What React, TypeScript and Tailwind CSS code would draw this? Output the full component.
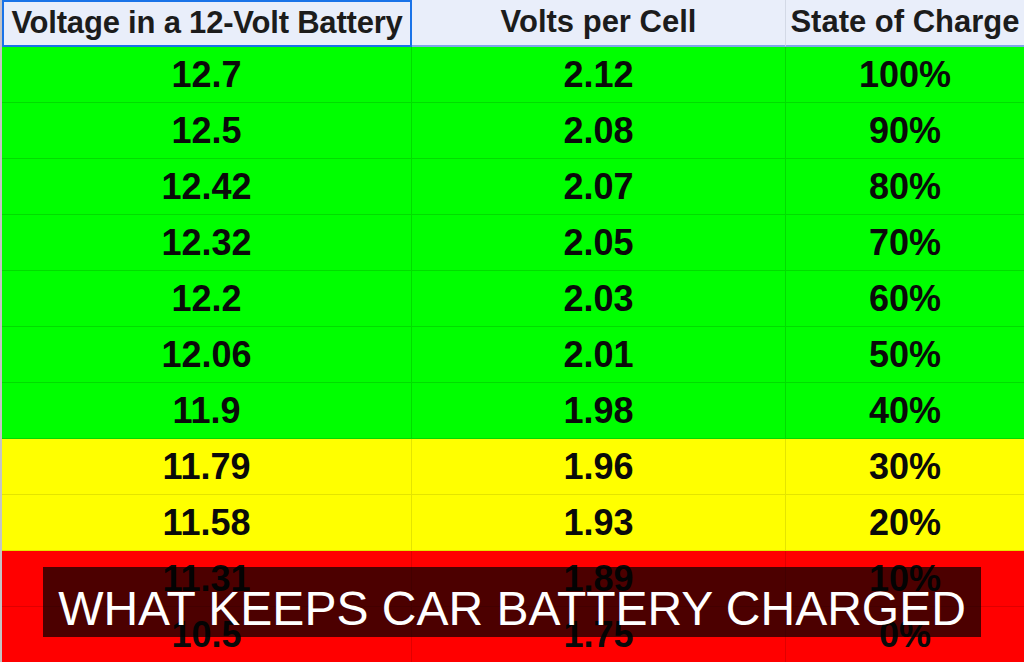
import React from 'react';

type Row = { volts: string; cell: string; charge: string; tone: 'green' | 'yellow' | 'red' };

const rows: Row[] = [
  { volts: '12.7', cell: '2.12', charge: '100%', tone: 'green' },
  { volts: '12.5', cell: '2.08', charge: '90%', tone: 'green' },
  { volts: '12.42', cell: '2.07', charge: '80%', tone: 'green' },
  { volts: '12.32', cell: '2.05', charge: '70%', tone: 'green' },
  { volts: '12.2', cell: '2.03', charge: '60%', tone: 'green' },
  { volts: '12.06', cell: '2.01', charge: '50%', tone: 'green' },
  { volts: '11.9', cell: '1.98', charge: '40%', tone: 'green' },
  { volts: '11.79', cell: '1.96', charge: '30%', tone: 'yellow' },
  { volts: '11.58', cell: '1.93', charge: '20%', tone: 'yellow' },
  { volts: '11.31', cell: '1.89', charge: '10%', tone: 'red' },
  { volts: '10.5', cell: '1.75', charge: '0%', tone: 'red' },
];

const toneClass = {
  green: 'bg-[#00ff00] border-[#00dd00]',
  yellow: 'bg-[#ffff00] border-[#e4e400]',
  red: 'bg-[#ff0000] border-[#e00000]',
};

const Cell = ({ value, tone, last }: { value: string; tone: Row['tone']; last?: boolean }) => (
  <div
    className={`h-[56px] flex items-center justify-center border-b ${last ? '' : 'border-r'} ${toneClass[tone]} text-[36px] font-bold text-[#0a0a0a] leading-none`}
  >
    {value}
  </div>
);

const App: React.FC = () => {
  return (
    <div
      className="relative w-[1024px] h-[662px] overflow-hidden bg-white border-l-2 border-[#c4c4c4]"
      style={{ fontFamily: '"Liberation Sans", Arial, sans-serif' }}
    >
      <div className="grid grid-cols-[410px_374px_238px]">
        <div className="h-[47px] flex items-center justify-center bg-[#e9eefa] border-2 border-[#1a73e8] text-[31px] font-bold text-[#1c1c1c] whitespace-nowrap tracking-[-0.2px]">
          Voltage in a 12-Volt Battery
        </div>
        <div className="h-[47px] flex items-center justify-center bg-[#e9eefa] border-r border-r-[#d3d9e6] border-b-2 border-b-[#7ea6ea] text-[31px] font-bold text-[#1c1c1c] whitespace-nowrap">
          Volts per Cell
        </div>
        <div className="h-[47px] flex items-center justify-center bg-[#e9eefa] border-b-2 border-b-[#7ea6ea] text-[31px] font-bold text-[#1c1c1c] whitespace-nowrap">
          State of Charge
        </div>
        {rows.map((r) => (
          <React.Fragment key={r.volts}>
            <Cell value={r.volts} tone={r.tone} />
            <Cell value={r.cell} tone={r.tone} />
            <Cell value={r.charge} tone={r.tone} last />
          </React.Fragment>
        ))}
      </div>

      {/* caption laid over the table */}
      <div className="absolute left-[41px] top-[567px] w-[938px] h-[70px] bg-black/70 flex justify-center pt-[18px]">
        <span className="text-[48px] leading-[48px] text-white whitespace-nowrap">
          WHAT KEEPS CAR BATTERY CHARGED
        </span>
      </div>
    </div>
  );
};

export default App;
